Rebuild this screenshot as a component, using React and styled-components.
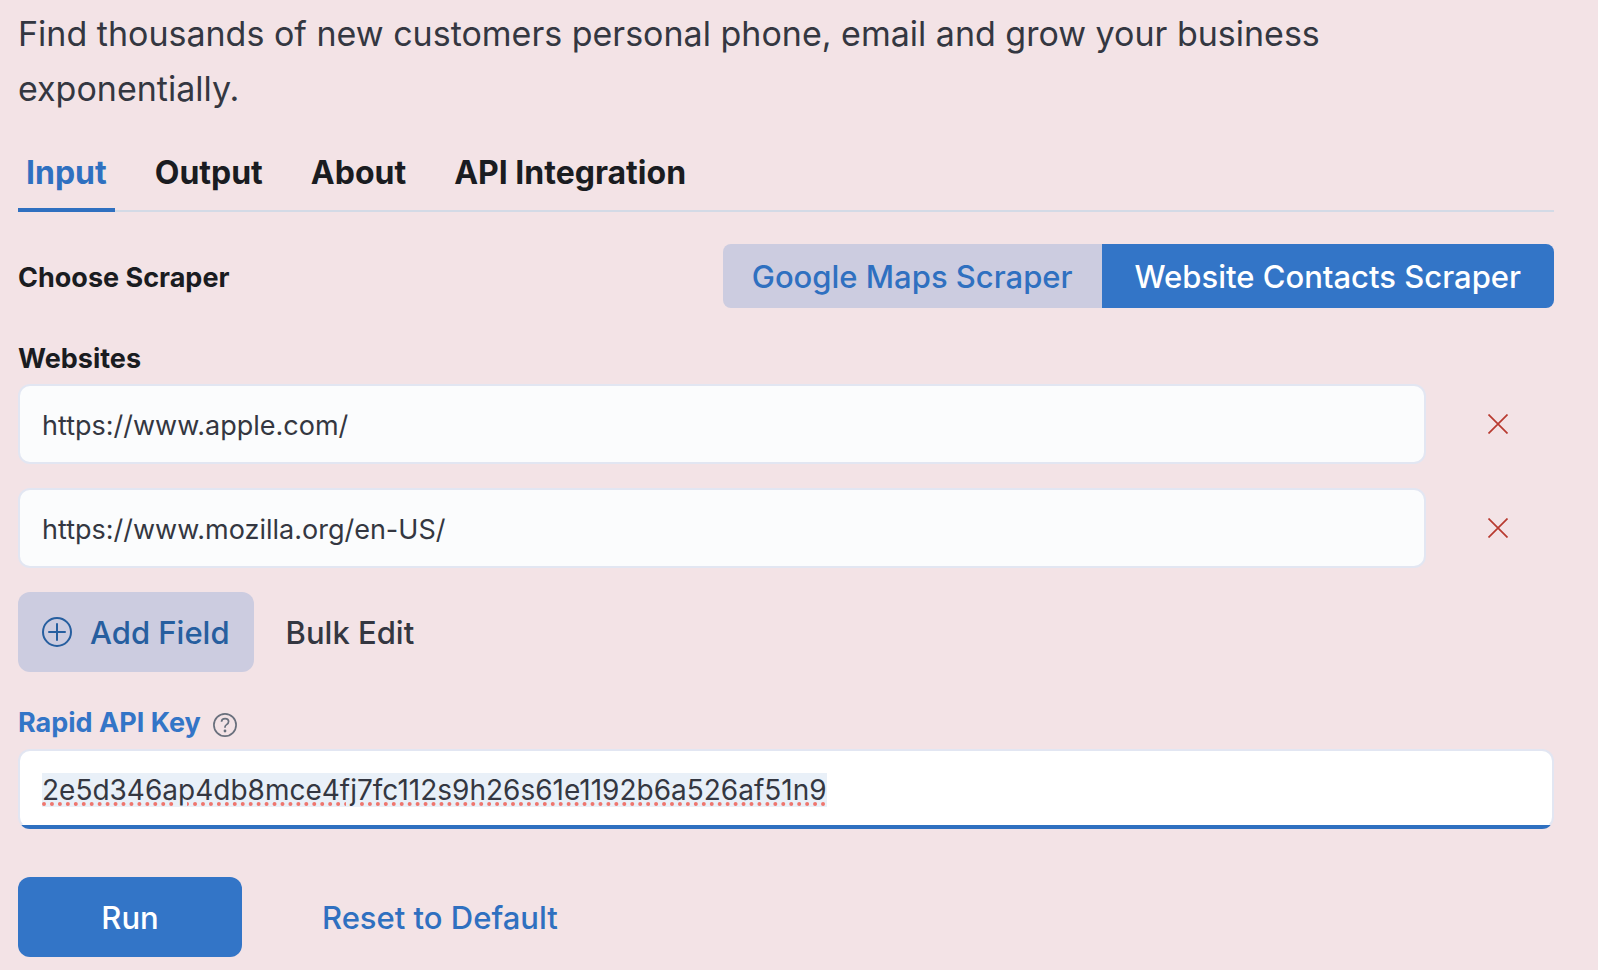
import React, { useEffect, useRef, useState } from "react";
import styled, { createGlobalStyle } from "styled-components";

const GlobalStyle = createGlobalStyle`
  *, *::before, *::after { box-sizing: border-box; }
  body {
    margin: 0;
    background: #f3e3e6;
    color: #343741;
    font-family: Inter, "Liberation Sans", sans-serif;
    font-size: 27px;
  }
  button, input { font: inherit; color: inherit; }
  button { border: 0; padding: 0; background: none; cursor: pointer; }
`;

const Page = styled.main`
  padding: 6px 44px 12px 18px;
`;

const Intro = styled.p`
  margin: 0;
  padding-right: 44px;
  font-size: 34px;
  line-height: 55px;
`;

const TabList = styled.div`
  display: flex;
  gap: 32px;
  margin-top: 32px;
  box-shadow: inset 0 -2px 0 #d3dae6;
`;

const Tab = styled.button`
  height: 64px;
  padding: 0 8px 10px;
  border-bottom: 4px solid ${(p) => (p.$active ? "#2f70c0" : "transparent")};
  color: ${(p) => (p.$active ? "#2f70c0" : "#1a1c21")};
  font-size: 32px;
  font-weight: 700;
  line-height: 48px;
`;

const ScraperRow = styled.div`
  display: flex;
  align-items: center;
  justify-content: space-between;
  margin-top: 32px;
`;

const Heading = styled.span`
  padding-top: 4px;
  color: #1a1c21;
  font-weight: 700;
  line-height: 36px;
`;

const Toggle = styled.div`
  display: flex;
  border-radius: 8px;
  overflow: hidden;
`;

const ToggleButton = styled.button`
  height: 64px;
  padding: 0 ${(p) => (p.$active ? 33 : 29)}px;
  background: ${(p) => (p.$active ? "#3375c7" : "#cccce0")};
  color: ${(p) => (p.$active ? "#ffffff" : "#2f70c0")};
  font-size: 31px;
  font-weight: 500;
`;

const FieldLabel = styled.label`
  display: block;
  color: ${(p) => (p.$focused ? "#3375c7" : "#1a1c21")};
  font-weight: 700;
  line-height: 38px;
`;

const Group = styled.section`
  display: flex;
  flex-direction: column;
  margin-top: 32px;
`;

const SiteList = styled.div`
  display: flex;
  flex-direction: column;
  gap: 24px;
  margin-top: 6px;
`;

const SiteRow = styled.div`
  display: flex;
  align-items: center;
  gap: 16px;
`;

const TextInput = styled.input`
  flex: 1;
  min-width: 0;
  width: 100%;
  height: 80px;
  padding: 2px 22px 0;
  border: 2px solid #e2e6f2;
  border-radius: 12px;
  outline: none;
  background: #fbfcfd;
`;

const KeyInput = styled(TextInput)`
  flex: none;
  margin-top: 7px;
  background: #ffffff linear-gradient(#2f70c0, #2f70c0) bottom / 100% 4px no-repeat border-box;
  border-bottom-color: transparent;
  font-size: 28px;
  text-underline-offset: 2px;
  text-decoration-skip-ink: none;
  &::selection {
    background: #e9f0f8;
    text-decoration: underline dotted #ee766e 4px;
  }
`;

const RemoveButton = styled.button`
  display: grid;
  place-items: center;
  width: 112px;
  height: 80px;
  color: #b83a30;
`;

const Actions = styled.div`
  display: flex;
  align-items: center;
  margin-top: ${(p) => p.$top}px;
`;

const AddButton = styled.button`
  display: flex;
  align-items: center;
  gap: 18px;
  height: 80px;
  padding: 0 24px;
  border-radius: 12px;
  background: #cccce0;
  color: #265e9f;
  font-size: 31px;
  font-weight: 500;
`;

const TextButton = styled.button`
  height: 80px;
  margin-left: ${(p) => (p.$primary ? 80 : 32)}px;
  color: ${(p) => (p.$primary ? "#2f70c0" : "#343741")};
  font-size: 31px;
  font-weight: 500;
`;

const RunButton = styled.button`
  width: 224px;
  height: 80px;
  border-radius: 12px;
  background: #3375c7;
  color: #ffffff;
  font-size: 31px;
  font-weight: 500;
`;

const LabelRow = styled.div`
  display: flex;
  align-items: center;
  gap: 12px;
`;

const HelpButton = styled.button`
  display: grid;
  padding-top: 4px;
  color: #69707d;
`;

const CrossIcon = () => (
  <svg width="20" height="20" viewBox="0 0 20 20" fill="none" stroke="currentColor" strokeWidth="1.7" aria-hidden="true">
    <path d="M.5.5l19 19M19.5.5l-19 19" />
  </svg>
);

const PlusIcon = () => (
  <svg width="30" height="30" viewBox="0 0 30 30" fill="none" stroke="currentColor" strokeWidth="2" aria-hidden="true">
    <circle cx="15" cy="15" r="14" />
    <path d="M15 7v16M7 15h16" strokeLinecap="round" />
  </svg>
);

const HelpIcon = () => (
  <svg width="24" height="24" viewBox="0 0 24 24" fill="none" stroke="currentColor" strokeWidth="1.7" aria-hidden="true">
    <circle cx="12" cy="12" r="11.1" />
    <path d="M8.5 8.8c.1-2 1.5-3.2 3.6-3.2s3.5 1.2 3.5 3c0 1.4-.7 2.2-2 3-1.1.7-1.6 1.3-1.6 2.5v.7" />
    <circle cx="12" cy="18" r="1.4" fill="currentColor" stroke="none" />
  </svg>
);

const TABS = ["Input", "Output", "About", "API Integration"];
const SCRAPERS = ["Google Maps Scraper", "Website Contacts Scraper"];

export default function App() {
  const [tab, setTab] = useState("Input");
  const [scraper, setScraper] = useState(SCRAPERS[1]);
  const [sites, setSites] = useState(["https://www.apple.com/", "https://www.mozilla.org/en-US/"]);
  const keyRef = useRef(null);

  useEffect(() => {
    keyRef.current.focus();
    keyRef.current.select();
  }, []);

  return (
    <>
      <GlobalStyle />
      <Page>
        <Intro>
          Find thousands of new customers personal phone, email and grow your business exponentially.
        </Intro>
        <TabList role="tablist">
          {TABS.map((name) => (
            <Tab key={name} role="tab" aria-selected={tab === name} $active={tab === name} onClick={() => setTab(name)}>
              {name}
            </Tab>
          ))}
        </TabList>
        <ScraperRow>
          <Heading id="scraper-label">Choose Scraper</Heading>
          <Toggle role="group" aria-labelledby="scraper-label">
            {SCRAPERS.map((name) => (
              <ToggleButton key={name} aria-pressed={scraper === name} $active={scraper === name} onClick={() => setScraper(name)}>
                {name}
              </ToggleButton>
            ))}
          </Toggle>
        </ScraperRow>
        <Group>
          <FieldLabel htmlFor="site-0">Websites</FieldLabel>
          <SiteList>
            {sites.map((site, i) => (
              <SiteRow key={i}>
                <TextInput
                  id={`site-${i}`}
                  aria-label={`Website ${i + 1}`}
                  value={site}
                  onChange={(e) => setSites(sites.map((s, j) => (j === i ? e.target.value : s)))}
                />
                <RemoveButton aria-label="Remove website" onClick={() => setSites(sites.filter((_, j) => j !== i))}>
                  <CrossIcon />
                </RemoveButton>
              </SiteRow>
            ))}
          </SiteList>
          <Actions $top={24}>
            <AddButton onClick={() => setSites([...sites, ""])}>
              <PlusIcon />
              Add Field
            </AddButton>
            <TextButton>Bulk Edit</TextButton>
          </Actions>
        </Group>
        <Group>
          <LabelRow>
            <FieldLabel htmlFor="api-key" $focused>Rapid API Key</FieldLabel>
            <HelpButton aria-label="Help"><HelpIcon /></HelpButton>
          </LabelRow>
          <KeyInput id="api-key" ref={keyRef} spellCheck={false} defaultValue="2e5d346ap4db8mce4fj7fc112s9h26s61e1192b6a526af51n9" />
        </Group>
        <Actions $top={48}>
          <RunButton>Run</RunButton>
          <TextButton $primary>Reset to Default</TextButton>
        </Actions>
      </Page>
    </>
  );
}
